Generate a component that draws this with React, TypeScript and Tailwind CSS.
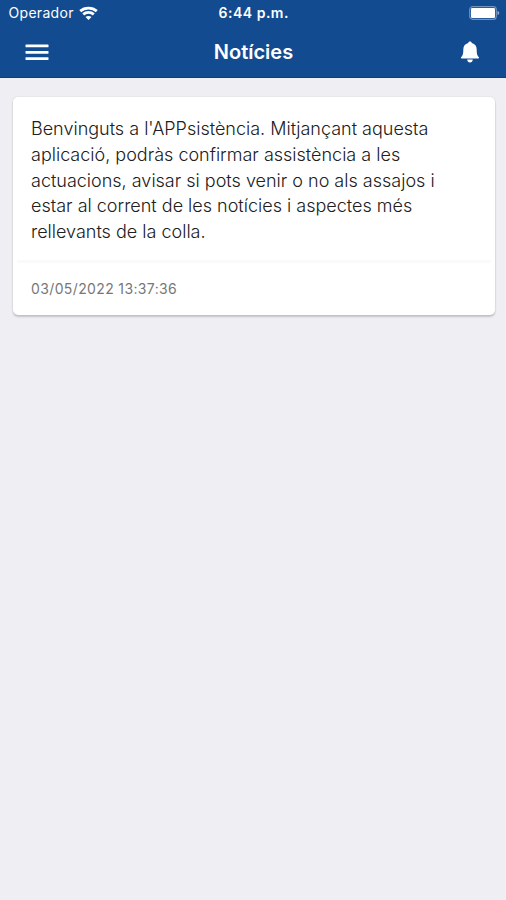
interface NewsItem {
  id: number;
  lines: string[];
  date: string;
}

const news: NewsItem[] = [
  {
    id: 1,
    lines: [
      "Benvinguts a l'APPsistència. Mitjançant aquesta",
      'aplicació, podràs confirmar assistència a les',
      'actuacions, avisar si pots venir o no als assajos i',
      'estar al corrent de les notícies i aspectes més',
      'rellevants de la colla.',
    ],
    date: '03/05/2022 13:37:36',
  },
];

const WifiIcon = () => (
  <svg width="19" height="14" viewBox="0 0 19 14" fill="none" stroke="currentColor" strokeWidth="2.8">
    <path d="M1.200 5.100C5.800 1 13.200 1 17.800 5.100" />
    <path d="M4.200 8.400C7.200 5.800 11.800 5.800 14.800 8.400" />
    <path d="M9.500 14 6.500 11C8.200 9.500 10.800 9.500 12.500 11Z" fill="currentColor" stroke="none" />
  </svg>
);

const BatteryIcon = () => (
  <svg width="31" height="14" viewBox="0 0 31 14">
    <rect x="0.7" y="0.7" width="26.6" height="12.6" rx="3" fill="none" stroke="#fff" strokeOpacity="0.4" strokeWidth="1.2" />
    <rect x="2" y="2" width="24" height="10" rx="1.3" fill="#fff" />
    <path d="M28.5 5v4c1.1-.4 1.7-1.1 1.7-2s-.6-1.6-1.7-2z" fill="#fff" fillOpacity="0.55" />
  </svg>
);

const MenuIcon = () => (
  <svg width="24" height="17" viewBox="0 0 24 17" fill="currentColor">
    <rect x="0.5" y="0.5" width="23" height="2.8" rx="0.4" />
    <rect x="0.5" y="6.9" width="23" height="2.8" rx="0.4" />
    <rect x="0.5" y="13.2" width="23" height="2.8" rx="0.4" />
  </svg>
);

const BellIcon = () => (
  <svg width="20" height="23" viewBox="0 0 20 23" fill="currentColor">
    <path d="M10 0.500c-1 0-1.700.7-1.800 1.600C5 2.900 3.300 5.300 3.300 8.600c0 4.300-.5 6-2 7.500-.7.700-.3 1.500.5 1.500h16.400c.8 0 1.200-.8.5-1.500-1.500-1.500-2-3.200-2-7.500 0-3.300-1.700-5.700-4.900-6.500C11.700 1.200 11 .5 10 .5z" />
    <path d="M7.200 18.600h5.600c-.1 1.800-1.200 3-2.800 3s-2.700-1.200-2.800-3z" />
  </svg>
);

const Header = () => (
  <header className="h-[78px] border-b border-[#0b3f85] bg-[#134b91] text-white">
    <div className="grid h-[26px] grid-cols-3 items-center pl-[8.5px] pr-[6px] text-[14px] leading-5">
      <div className="flex items-center gap-[5px]">
        <span className="pb-[1px] tracking-[0.3px]">Operador</span>
        <WifiIcon />
      </div>
      <span className="pr-[1px] pb-[1px] text-center font-semibold tracking-[0.5px]">6:44 p.m.</span>
      <div className="flex justify-end">
        <BatteryIcon />
      </div>
    </div>
    <div className="grid h-[52px] grid-cols-3 items-center pl-[25px] pr-[26px]">
      <button className="justify-self-start">
        <MenuIcon />
      </button>
      <h1 className="pl-[2px] text-center text-[20px] font-semibold">Notícies</h1>
      <button className="justify-self-end">
        <BellIcon />
      </button>
    </div>
  </header>
);

const NewsCard = ({ item }: { item: NewsItem }) => (
  <article className="h-[218px] rounded-[5px] bg-white shadow-[0_2px_2px_rgba(0,0,0,0.17),0_0_2px_rgba(0,0,0,0.12)]">
    <div className="h-[163px] px-[18px] pt-[19px] text-[18px] leading-[25.75px] text-[#202020]">
      {item.lines.map((line) => (
        <p key={line} className="whitespace-nowrap font-light">{line}</p>
      ))}
    </div>
    <div className="mx-1 h-[3px] bg-[#fafafa]" />
    <p className="px-[18px] pt-[16px] text-[14px] leading-5 tracking-[0.37px] text-[#777]">{item.date}</p>
  </article>
);

export default function App() {
  return (
    <div className="min-h-screen bg-[#eeeef3] font-[Inter,sans-serif]">
      <Header />
      <main className="pt-[19px] pr-[11px] pl-[13px]">
        {news.map((item) => (
          <NewsCard key={item.id} item={item} />
        ))}
      </main>
    </div>
  );
}
